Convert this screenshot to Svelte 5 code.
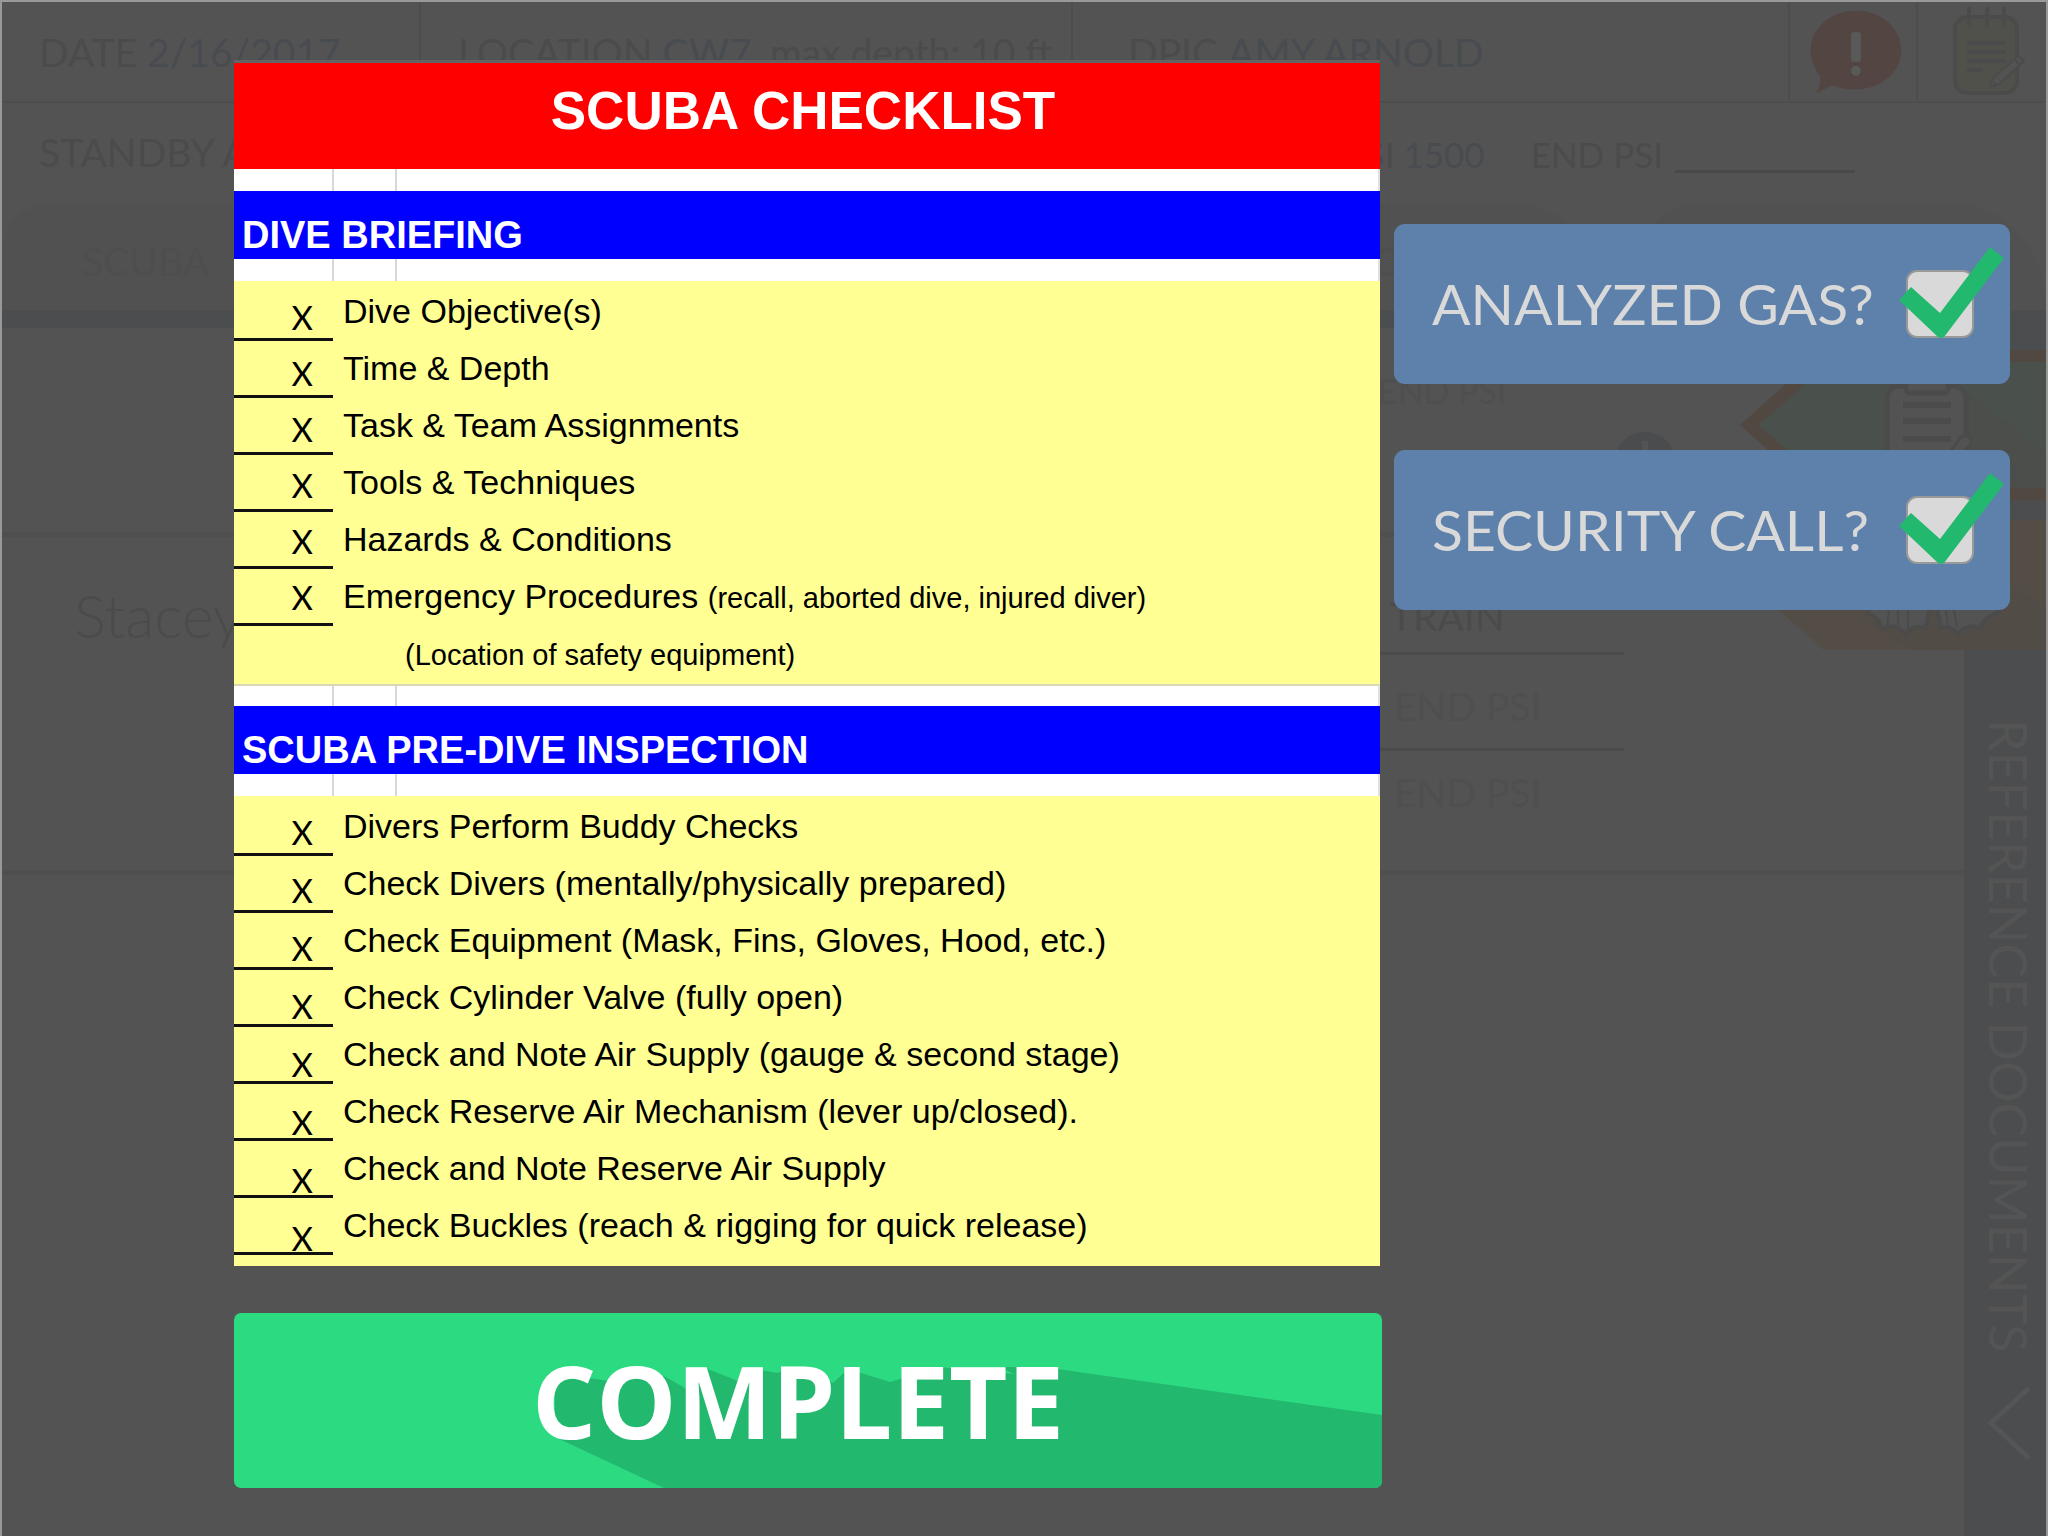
<script>
  const briefing = [
    { text: 'Dive Objective(s)' },
    { text: 'Time & Depth' },
    { text: 'Task & Team Assignments' },
    { text: 'Tools & Techniques' },
    { text: 'Hazards & Conditions' },
    { text: 'Emergency Procedures', detail: '(recall, aborted dive, injured diver)' }
  ];
  const inspection = [
    { text: 'Divers Perform Buddy Checks' },
    { text: 'Check Divers (mentally/physically prepared)' },
    { text: 'Check Equipment (Mask, Fins, Gloves, Hood, etc.)' },
    { text: 'Check Cylinder Valve (fully open)' },
    { text: 'Check and Note Air Supply (gauge & second stage)' },
    { text: 'Check Reserve Air Mechanism (lever up/closed).' },
    { text: 'Check and Note Reserve Air Supply' },
    { text: 'Check Buckles (reach & rigging for quick release)' }
  ];
  const sections = [
    { id: 'briefing', title: 'DIVE BRIEFING', items: briefing, note: '(Location of safety equipment)' },
    { id: 'inspection', title: 'SCUBA PRE-DIVE INSPECTION', items: inspection }
  ];
  const confirmations = [
    { id: 'gas', text: 'ANALYZED GAS?' },
    { id: 'security', text: 'SECURITY CALL?' }
  ];
</script>

<div class="app">
  <div class="log">
    <header class="info">
      <div class="cell date">DATE&nbsp;<b>2/16/2017</b></div>
      <div class="cell location">LOCATION&nbsp;<b>CW7</b><span class="depth">max depth: 10 ft</span></div>
      <div class="cell dpic">DPIC&nbsp;<b>AMY ARNOLD</b></div>
      <button class="cell icon" aria-label="Emergency">
        <svg width="128" height="100" viewBox="0 0 128 100">
          <path d="M26 92Q31 85 31 75C24 66 21 57 21 48 21 26 41 8 67 8s46 18 46 40-20 40-46 40c-9 0-17-1-24-4Z" fill="#534541" />
          <rect x="62" y="30" width="10" height="30" rx="2" fill="#595959" />
          <circle cx="67" cy="69" r="5" fill="#595959" />
        </svg>
      </button>
      <button class="cell icon" aria-label="Notes">
        <svg width="128" height="100" viewBox="0 0 128 100" fill="none" stroke="#4b4b4b" stroke-width="4">
          <rect x="37" y="15" width="62" height="76" rx="12" fill="#51514b" />
          <path d="M51 5v20M69 5v20M86 5v20M49 41h39M49 50h39M49 59h39M49 68h16" />
          <path d="m72 85 2-8 26-23 6 5-26 24Z" fill="#535353" stroke-width="2" />
          <path d="m75 80 4 3M97 58l5 5" stroke-width="2" />
        </svg>
      </button>
    </header>

    <div class="crew">
      <span>STANDBY A</span>
      <span class="psi">START PSI <b>1500</b></span>
      <span class="end">END PSI</span>
      <span class="blank"></span>
    </div>

    <nav class="tabs">
      <a class="tab" href="#scuba">SCUBA</a>
      <a class="tab second" href="#ccr">CCR</a>
      <a class="tab" href="#log" aria-label="Log"></a>
    </nav>

    <div class="sheet">
      <main class="diver">
        <div class="name">Stacey</div>
        <div class="readings">
          <div class="reading first">END PSI</div>
          <div class="reading train">TRAIN</div>
          <div class="reading">END PSI</div>
          <div class="reading last">END PSI</div>
        </div>
        <svg class="clock" width="62" height="62" viewBox="0 0 62 62">
          <circle cx="31" cy="31" r="31" fill="#4b4c4e" />
          <path d="M31 9v25h14" fill="none" stroke="#535353" stroke-width="6" />
        </svg>
      </main>
      <aside class="rail">
        <svg class="flags" width="306" height="340" viewBox="0 0 306 340">
          <rect x="224" width="82" height="40" fill="#4c4d4f" />
          <path d="M84 40h222v150H84L0 115Z" fill="#524842" />
          <path d="M91 52h215v126H91L19 115Z" fill="#4a514d" />
          <path d="M224 82 306 142v36H150Z" fill="#4b4e4b" />
          <rect x="160" y="190" width="146" height="20" fill="#4c4d4f" />
          <path d="M82 210h224v130H84L10 275Z" fill="#534d46" />
          <path d="M249 260 306 299v41H172l-40-26Z" fill="#514c46" />
          <g stroke="#4b4b4b" stroke-width="5" fill="#535353">
            <rect x="147" y="76" width="79" height="96" rx="12" />
            <path d="M166 66h42v12q0 5-5 5h-32q-5 0-5-5Z" />
            <path d="M163 95h48M163 111h48M163 129h48" stroke-width="6" />
            <path d="m206 148 14-20q6-5 10 0 3 4-1 8l-13 14" stroke-width="3" />
            <path d="M127 303q12 4 15 16 13-7 23 5 8-10 21-6l4-20h-60Z" stroke-width="4" />
            <path d="m197 298 4 20q10-3 17 6 8-11 22-6 5-12 18-15l-2-6Z" stroke-width="4" />
            <path d="m149 300-2 16M158 300v18M168 300v18M206 300l2 18M214 300l3 17" stroke-width="2" />
          </g>
        </svg>
        <button class="documents">
          <span>REFERENCE DOCUMENTS</span>
          <svg width="44" height="74" viewBox="0 0 44 74" fill="none" stroke="#555" stroke-width="5">
            <path d="M42 2 4 37l38 35" />
          </svg>
        </button>
      </aside>
    </div>
  </div>

  <div class="overlay" role="dialog" aria-label="Scuba checklist">
    <form class="checklist">
      <h1>SCUBA CHECKLIST</h1>
      {#each sections as section}
        <div class="gridrow"></div>
        <h2>{section.title}</h2>
        <div class="gridrow"></div>
        <div class="body">
          <div class="items">
            {#each section.items as item, i}
              <div class="item">
                <span class="line"></span>
                <label for="{section.id}-{i}">{item.text}{#if item.detail}&nbsp;<small>{item.detail}</small>{/if}</label>
              </div>
            {/each}
            {#if section.note}<small class="note">{section.note}</small>{/if}
          </div>
          <div class="marks {section.id}">
            {#each section.items as item, i}
              <label class="mark"><input id="{section.id}-{i}" type="checkbox" checked aria-label={item.text} /><span>X</span></label>
            {/each}
          </div>
        </div>
      {/each}
    </form>

    <div class="confirmations">
      {#each confirmations as c}
        <label class="confirm">
          <span class="question">{c.text}</span>
          <span class="box">
            <input id={c.id} type="checkbox" checked />
            <svg width="106" height="92" viewBox="0 0 106 92"><path d="M0 53 12 40 41 66 91 0l14 11L45 90l-3 1-3-1Z" fill="#22b86d" /></svg>
          </span>
        </label>
      {/each}
    </div>

    <button class="complete">
      <svg viewBox="0 0 1148 175" preserveAspectRatio="none" aria-hidden="true">
        <path d="M321 124 430 175H1148V102L823 56V54H769V56L780 61 705 54 656 69 614 56 599 70 564 54 543 60 522 56 504 68 471 55 454 77 430 63 374 68Q350 62 321 69Z" fill="#22b86d" />
      </svg>
      <span>COMPLETE</span>
    </button>
  </div>
</div>

<style>
  :global(body) { background: #535353; }
  * { box-sizing: border-box; }
  button { font: inherit; color: inherit; background: none; border: 0; padding: 0; }
  .app {
    display: grid;
    min-height: 100vh;
    overflow: hidden;
    border: 2px solid #999;
    border-bottom: 0;
    background: #535353;
    font-family: Lato, "Open Sans", sans-serif;
  }
  .log, .overlay { grid-area: 1 / 1; min-width: 0; }
  .log {
    display: flex;
    flex-direction: column;
    color: #4b4b4b;
    font-size: 39px;
  }
  .log b { font-weight: 400; color: #484b50; }
  .info {
    display: grid;
    grid-template-columns: minmax(0, 419fr) minmax(0, 652fr) minmax(0, 717fr) minmax(0, 128fr) minmax(0, 128fr);
    height: 101px;
    border-bottom: 2px solid #4d4d4d;
  }
  .cell { display: flex; align-items: center; white-space: nowrap; border-right: 2px solid #4d4d4d; }
  .date, .location { padding-left: 37px; }
  .dpic { padding-left: 55px; }
  .icon { justify-content: center; }
  .icon:last-child { border-right: 0; }
  .depth { margin-left: 18px; }
  .crew { display: flex; align-items: center; height: 101px; padding: 0 191px 4px 37px; }
  .psi { margin-left: auto; padding-top: 4px; font-size: 35px; }
  .end { margin-left: 46px; padding-top: 4px; font-size: 35px; }
  .blank { width: 180px; height: 42px; margin-left: 12px; border-bottom: 3px solid #494949; }
  .tabs { display: grid; grid-template-columns: 1fr 1fr 400px; height: 106px; gap: 40px; }
  .tab {
    display: flex;
    align-items: center;
    padding: 8px 0 0 80px;
    color: #4e4e4e;
    text-decoration: none;
    background: #515151;
    border-radius: 48px 90px 0 0 / 48px 106px 0 0;
  }
  .second { padding-left: 548px; }
  .sheet { flex: 1; display: flex; border-top: 18px solid #4c4d4f; }
  .diver { flex: 1; display: grid; grid-template-columns: 1376px 1fr; grid-template-rows: 547px; }
  .name {
    grid-area: 1 / 1 / 2 / 3;
    margin-top: 204px;
    border-top: 5px solid #4f4f4f;
    border-bottom: 5px solid #4f4f4f;
    padding: 42px 72px;
    font-size: 60px;
    font-weight: 300;
  }
  .readings { grid-area: 1 / 2; width: 246px; padding-top: 42px; }
  .reading { height: 96px; padding: 28px 0 0 16px; color: #4f4f4f; border-bottom: 3px solid #4b4b4b; }
  .first { height: 189px; padding: 0; border: 0; font-size: 34px; }
  .train { padding: 34px 0 0 12px; color: #4b4b4b; }
  .last { padding-top: 18px; border: 0; }
  .clock { grid-area: 1 / 2; margin: 104px 0 0 236px; }
  .rail { display: flex; flex-direction: column; width: 82px; margin-top: -18px; }
  .flags { align-self: flex-end; flex: none; }
  .documents {
    flex: 1;
    display: flex;
    flex-direction: column;
    align-items: center;
    gap: 34px;
    padding: 69px 0 0 8px;
    background: #4c4d4f;
    color: #545454;
    font-size: 52px;
  }
  .documents span { writing-mode: vertical-rl; white-space: nowrap; }

  .overlay {
    display: grid;
    grid-template-columns: minmax(0, 1148fr) minmax(0, 616fr);
    column-gap: 12px;
    align-content: start;
    padding: 58px 36px 47px 232px;
  }
  .checklist {
    margin-right: 2px;
    border-top: 3px solid #646464;
    background: #ffff94;
    color: #000;
    font-family: "Liberation Sans", Arial, sans-serif;
  }
  h1, h2 { margin: 0; color: #fff; font-weight: 700; }
  h1 { height: 106px; line-height: 96px; padding-right: 8px; text-align: center; font-size: 53px; background: #f00; }
  h2 { height: 68px; padding: 7px 8px 0; line-height: 74px; font-size: 38px; background: #00f; }
  .gridrow {
    height: 22px;
    background:
      linear-gradient(#d8d8d8, #d8d8d8) 98px 0 / 2px 100% no-repeat,
      linear-gradient(#d8d8d8, #d8d8d8) 161px 0 / 2px 100% no-repeat,
      #fff;
    border-right: 2px solid #e0e0e0;
  }
  .body { display: grid; grid-template-columns: 99px 1fr; padding: 3px 0 0; }
  .body + .gridrow { border-top: 2px solid #d8d8b8; }
  .items { grid-area: 1 / 1 / 2 / 3; display: flex; flex-direction: column; }
  .item { display: grid; grid-template-columns: 99px 1fr; column-gap: 10px; height: 57px; font-size: 34px; }
  .item label { line-height: 54px; white-space: nowrap; }
  .line { border-bottom: 3px solid #111; }
  small { font-size: 29px; }
  .note { height: 58px; padding-left: 171px; line-height: 58px; }
  .marks { grid-area: 1 / 1; display: flex; flex-direction: column; align-items: flex-end; padding-right: 20px; }
  .mark { position: relative; display: block; height: 56px; line-height: 67px; font-family: Lato, sans-serif; font-size: 33px; }
  .inspection .mark { height: 58px; }
  .inspection { padding-bottom: 3px; }
  .mark input { position: absolute; inset: 0; margin: 0; opacity: 0; }
  .mark input:not(:checked) + span { visibility: hidden; }

  .confirmations { display: flex; flex-direction: column; gap: 66px; padding-top: 164px; }
  .confirm {
    display: flex;
    align-items: center;
    justify-content: space-between;
    height: 160px;
    padding: 0 36px 0 38px;
    border-radius: 11px;
    background: #5e81ab;
    color: #d9d9d9;
    font-size: 57px;
    white-space: nowrap;
  }
  .question { padding-bottom: 2px; }
  .box { position: relative; width: 68px; height: 68px; }
  .box input {
    display: block;
    width: 68px;
    height: 68px;
    margin: 0;
    appearance: none;
    border: 2px solid #999;
    border-radius: 11px;
    background: #d9d9d9;
  }
  .box svg { position: absolute; left: -7px; top: -23px; pointer-events: none; }
  .box input:not(:checked) + svg { display: none; }

  .complete {
    position: relative;
    grid-column: 1;
    height: 175px;
    margin-top: 47px;
    padding: 0 20px 0 0;
    border-radius: 7px;
    overflow: hidden;
    background: #2cda82;
    color: #fff;
    font-family: "Open Sans", "Noto Sans", sans-serif;
    font-size: 101px;
    font-weight: 700;
    line-height: 175px;
  }
  .complete svg { position: absolute; inset: 0; width: 100%; height: 100%; }
  .complete span { position: relative; }
</style>
